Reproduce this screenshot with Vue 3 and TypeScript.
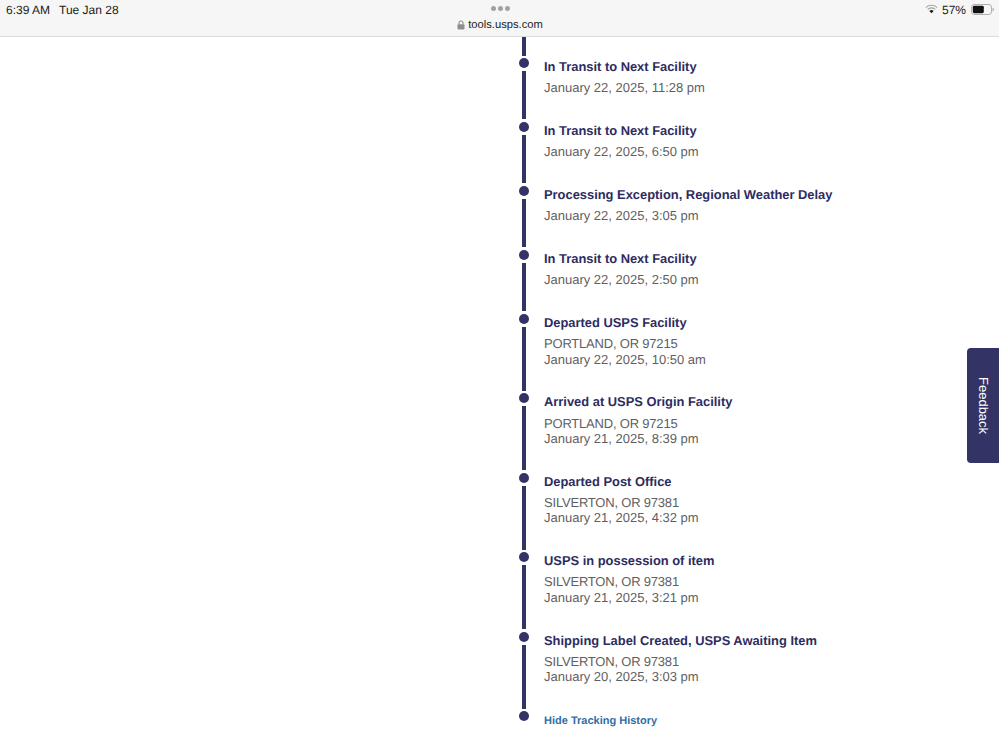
<template>
  <div class="page">
    <header class="status-bar">
      <div class="status-left">
        <span class="clock">6:39 AM</span>
        <span>Tue Jan 28</span>
      </div>
      <div class="status-center">
        <div class="grabber"><i></i><i></i><i></i></div>
        <div class="address">
          <svg class="lock" width="8" height="10" viewBox="0 0 8 10">
            <path d="M2 4.5V3a2 2 0 0 1 4 0v1.5" fill="none" stroke="#8e8e8e" stroke-width="1.1" />
            <rect x="0.5" y="4.2" width="7" height="5.3" rx="1" fill="#8e8e8e" />
          </svg>
          <span>tools.usps.com</span>
        </div>
      </div>
      <div class="status-right">
        <svg class="wifi" width="13" height="10" viewBox="0 0 14 10">
          <path d="M0.8 3.4a9 9 0 0 1 12.4 0" fill="none" stroke="#a8a8a8" stroke-width="1.1" />
          <path d="M2.9 5.4a6 6 0 0 1 8.2 0" fill="none" stroke="#9a9a9a" stroke-width="1.1" />
          <path d="M4.7 7.2a3.4 3.4 0 0 1 4.6 0L7 9.6z" fill="#1c1c1c" />
        </svg>
        <span class="percent">57%</span>
        <svg class="battery" width="23" height="11" viewBox="0 0 23 11">
          <rect x="0.5" y="0.5" width="20" height="10" rx="2.6" fill="none" stroke="#b0b0b0" />
          <rect x="1.8" y="1.8" width="11" height="7.4" rx="1.4" fill="#111" />
          <path d="M21.6 3.8c.8.2 1.2.9 1.2 1.7s-.4 1.5-1.2 1.7z" fill="#9c9c9c" />
        </svg>
      </div>
    </header>

    <main class="timeline">
      <div class="stub"></div>
      <section v-for="(event, index) in events" :key="index" class="event">
        <div class="rail">
          <span class="dot"></span>
          <span class="line"></span>
        </div>
        <div class="detail">
          <h3>{{ event.status }}</h3>
          <p v-if="event.place" class="place">{{ event.place }}</p>
          <p>{{ event.date }}</p>
        </div>
      </section>
      <section class="event last">
        <div class="rail">
          <span class="dot"></span>
        </div>
        <a class="toggle" href="#">Hide Tracking History</a>
      </section>
    </main>

    <button class="feedback" type="button">Feedback</button>
  </div>
</template>

<script setup lang="ts">
interface TrackingEvent {
  status: string
  place?: string
  date: string
}

const events: TrackingEvent[] = [
  { status: 'In Transit to Next Facility', date: 'January 22, 2025, 11:28 pm' },
  { status: 'In Transit to Next Facility', date: 'January 22, 2025, 6:50 pm' },
  { status: 'Processing Exception, Regional Weather Delay', date: 'January 22, 2025, 3:05 pm' },
  { status: 'In Transit to Next Facility', date: 'January 22, 2025, 2:50 pm' },
  { status: 'Departed USPS Facility', place: 'PORTLAND, OR 97215', date: 'January 22, 2025, 10:50 am' },
  { status: 'Arrived at USPS Origin Facility', place: 'PORTLAND, OR 97215', date: 'January 21, 2025, 8:39 pm' },
  { status: 'Departed Post Office', place: 'SILVERTON, OR 97381', date: 'January 21, 2025, 4:32 pm' },
  { status: 'USPS in possession of item', place: 'SILVERTON, OR 97381', date: 'January 21, 2025, 3:21 pm' },
  { status: 'Shipping Label Created, USPS Awaiting Item', place: 'SILVERTON, OR 97381', date: 'January 20, 2025, 3:03 pm' }
]
</script>

<style>
html,
body {
  margin: 0;
  background: #fff;
  overflow: hidden;
}
</style>

<style scoped>
.page {
  position: relative;
  width: 999px;
  height: 749px;
  overflow: hidden;
  background: #fff;
  font-family: 'Liberation Sans', Arial, sans-serif;
  text-rendering: geometricPrecision;
}

.status-bar {
  display: grid;
  grid-template-columns: 1fr auto 1fr;
  height: 36px;
  padding: 0 5px 0 6px;
  background: #f6f6f6;
  border-bottom: 1px solid #dcdcdc;
  color: #1c1c1c;
  font-size: 12px;
}

.status-left {
  display: flex;
  gap: 9px;
  padding-top: 2.5px;
  line-height: 14px;
}

.status-center {
  display: flex;
  flex-direction: column;
  align-items: center;
}

.grabber {
  display: flex;
  gap: 2px;
  height: 18px;
  padding-top: 6px;
  box-sizing: border-box;
}

.grabber i {
  width: 5px;
  height: 5px;
  border-radius: 50%;
  background: #a2a2a2;
}

.address {
  display: flex;
  align-items: center;
  gap: 3px;
  font-size: 11.2px;
  line-height: 14px;
}

.status-right {
  display: flex;
  justify-content: flex-end;
  align-items: flex-start;
  gap: 4px;
  padding-top: 2.5px;
  line-height: 14px;
}

.wifi,
.battery {
  margin-top: 1.5px;
}

.percent {
  margin-right: 1px;
}

.timeline {
  display: flex;
  flex-direction: column;
  padding-left: 519px;
}

.stub {
  width: 4px;
  height: 19px;
  margin-left: 3px;
  background: #333366;
}

.event {
  display: flex;
  gap: 15px;
  margin-top: 1.7px;
}

.event + .event {
  margin-top: 0;
}

.rail {
  display: flex;
  flex-direction: column;
  align-items: center;
  flex: none;
  width: 10px;
}

.dot {
  flex: none;
  width: 10px;
  height: 10px;
  border-radius: 50%;
  background: #333366;
}

.line {
  flex: 1;
  width: 4px;
  margin-top: 3px;
  margin-bottom: 2.5px;
  background: #333366;
}

.detail {
  margin-top: -1px;
  padding-bottom: 26.1px;
}

.detail h3 {
  margin: 0 0 3.4px;
  color: #2d2c60;
  font-size: 12.9px;
  font-weight: 700;
  line-height: 20px;
}

.detail p {
  margin: 0;
  color: #5f5f5f;
  font-size: 13px;
  line-height: 15.5px;
}

.detail .place {
  letter-spacing: -0.2px;
}

.toggle {
  color: #2f6ea8;
  font-size: 11px;
  font-weight: 700;
  line-height: 14px;
  padding-top: 3px;
  text-decoration: none;
}

.feedback {
  position: absolute;
  top: 348px;
  right: 0;
  width: 32px;
  height: 115px;
  padding: 0;
  border: 0;
  border-radius: 4px 0 0 4px;
  background: #333366;
  color: #fff;
  font-family: inherit;
  font-size: 13px;
  writing-mode: vertical-rl;
  text-align: center;
}
</style>
